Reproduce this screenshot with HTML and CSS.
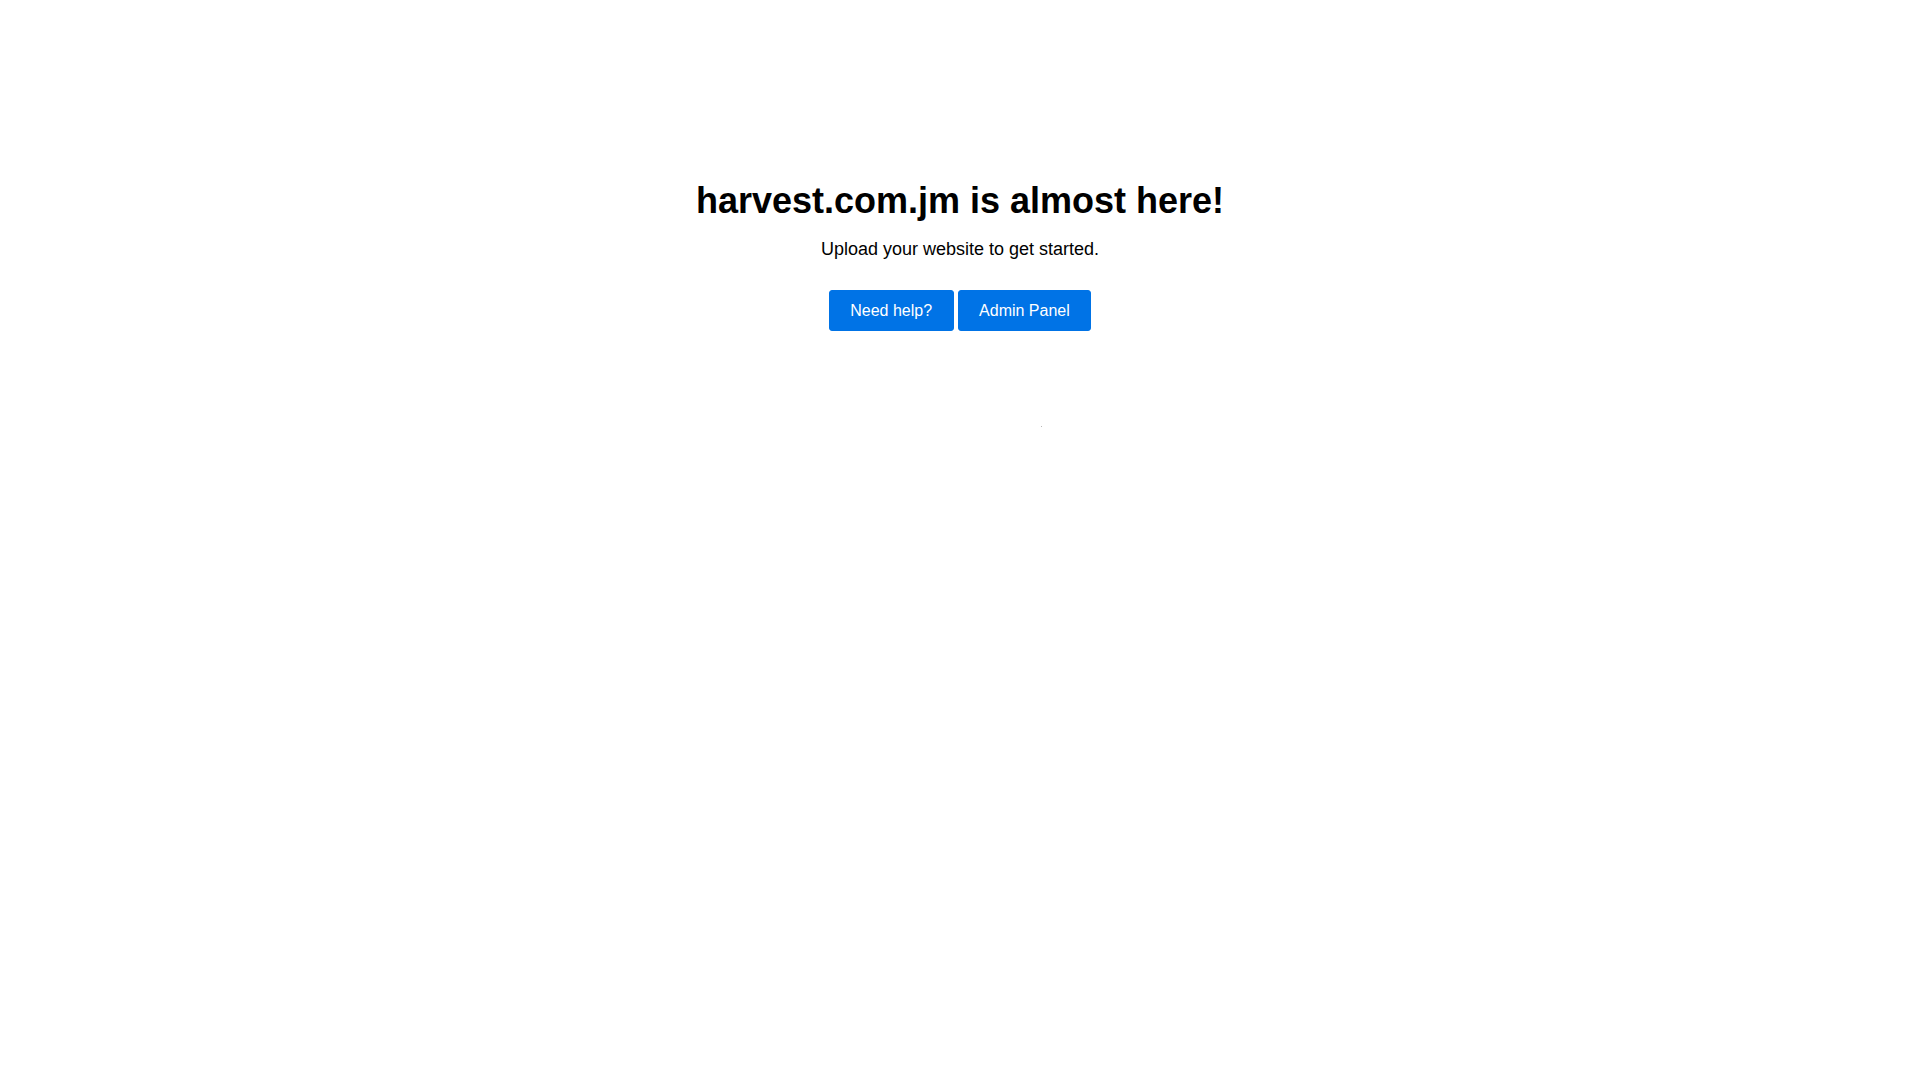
FILE: index.html
```html
<!DOCTYPE html>
<html lang="en">
<head>
<meta charset="utf-8">
<title>harvest.com.jm is almost here!</title>
<link rel="stylesheet" href="styles.css">
</head>
<body>
<main class="page">
  <h1 class="title">harvest.com.jm is almost here!</h1>
  <p class="subtitle">Upload your website to get started.</p>
  <div class="actions">
    <a class="btn" href="#">Need help?</a>
    <a class="btn" href="#">Admin Panel</a>
  </div>
  <div class="pixel-row"><span class="pixel"></span></div>
</main>
</body>
</html>
```

FILE: styles.css
```css
html, body {
  margin: 0;
  padding: 0;
  background: #ffffff;
}
body {
  font-family: "Liberation Sans", Arial, sans-serif;
  color: #000000;
}
.page {
  display: flex;
  flex-direction: column;
  align-items: center;
  padding-top: 180px;
  text-align: center;
}
.title {
  margin: 0;
  font-size: 36px;
  line-height: 41px;
  font-weight: bold;
}
.subtitle {
  margin: 18px 0 0;
  font-size: 18px;
  line-height: 21px;
}
.actions {
  display: flex;
  gap: 4px;
  margin-top: 30px;
}
.btn {
  display: block;
  padding: 10px 20.5px;
  border: 1px solid #0073e6;
  border-radius: 3px;
  background: #0073e6;
  color: #ffffff;
  font-size: 16px;
  line-height: 19px;
  text-decoration: none;
}
.pixel-row {
  width: 100%;
  display: flex;
  justify-content: center;
  margin-top: 95px;
}
.pixel {
  display: block;
  width: 1px;
  height: 1px;
  margin-left: 162px;
  background: #b8b8b8;
}
```
